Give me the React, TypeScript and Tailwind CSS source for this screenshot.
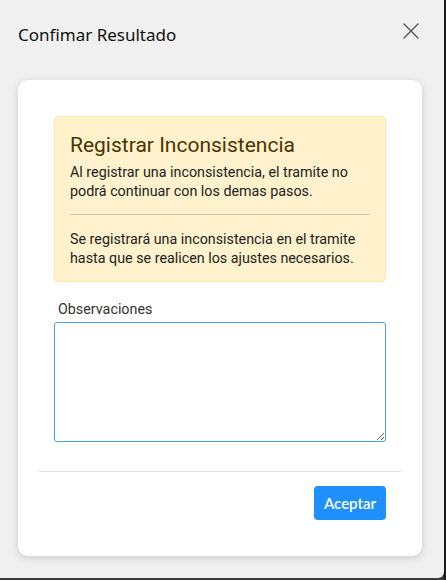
import { X } from "lucide-react";

export default function App() {
  return (
    <div className="w-[446px] h-[580px] bg-[#3a3a3a] flex overflow-hidden">
      <div className="w-[444px] h-[578px] bg-[#f0f0f0] rounded-br-[6px] flex flex-col">
        {/* Header */}
        <div className="h-[80px] flex items-start justify-between pl-[18px] pr-[19px]">
          <h1 className="mt-[23px] font-['Noto_Sans',sans-serif] text-[17px] leading-[24px] text-[#111]">
            Confimar Resultado
          </h1>
          <button className="mt-[17px] text-[#555] p-0">
            <X size={28} strokeWidth={1.2} />
          </button>
        </div>

        {/* Card */}
        <div className="ml-[18px] mr-[22px] mb-[22px] flex-1 bg-white rounded-[10px] shadow-[0_2px_8px_rgba(0,0,0,0.15)] flex flex-col">
          <div className="px-[36px] pt-[36px] font-['Roboto',sans-serif]">
            <div className="bg-[#fff2cc] border border-[#ffeaa8] rounded-[4px] px-[15px] pt-[14px] pb-[13px]">
              <h2 className="text-[21px] leading-[28px] text-[#4d3300] mb-[4px]">Registrar Inconsistencia</h2>
              <p className="text-[14.3px] leading-[19px] text-[#222]">
                Al registrar una inconsistencia, el tramite no podrá continuar con los demas pasos.
              </p>
              <hr className="border-0 border-t border-[#d9c9a0] mt-[13px] mb-[15px]" />
              <p className="text-[14.3px] leading-[19px] text-[#222]">
                Se registrará una inconsistencia en el tramite hasta que se realicen los ajustes necesarios.
              </p>
            </div>

            <label className="block mt-[18px] mb-[3px] pl-[4px] text-[14.3px] leading-[19px] text-[#333]">
              Observaciones
            </label>
            <textarea className="block w-full h-[120px] border border-[#4a9fe8] rounded-[3px] outline-none resize-y" />
          </div>

          <div className="mx-[21px] mt-[29px] border-t border-[#e2e2e2]" />

          <div className="flex justify-end px-[36px] pt-[14px]">
            <button className="h-[34px] w-[72px] rounded-[4px] bg-[#1e90ff] text-white font-['Lato',sans-serif] font-semibold text-[15px] leading-[20px]">
              Aceptar
            </button>
          </div>
        </div>
      </div>
      <div className="w-[2px] h-[580px] bg-[#1a1a1a]" />
    </div>
  );
}
